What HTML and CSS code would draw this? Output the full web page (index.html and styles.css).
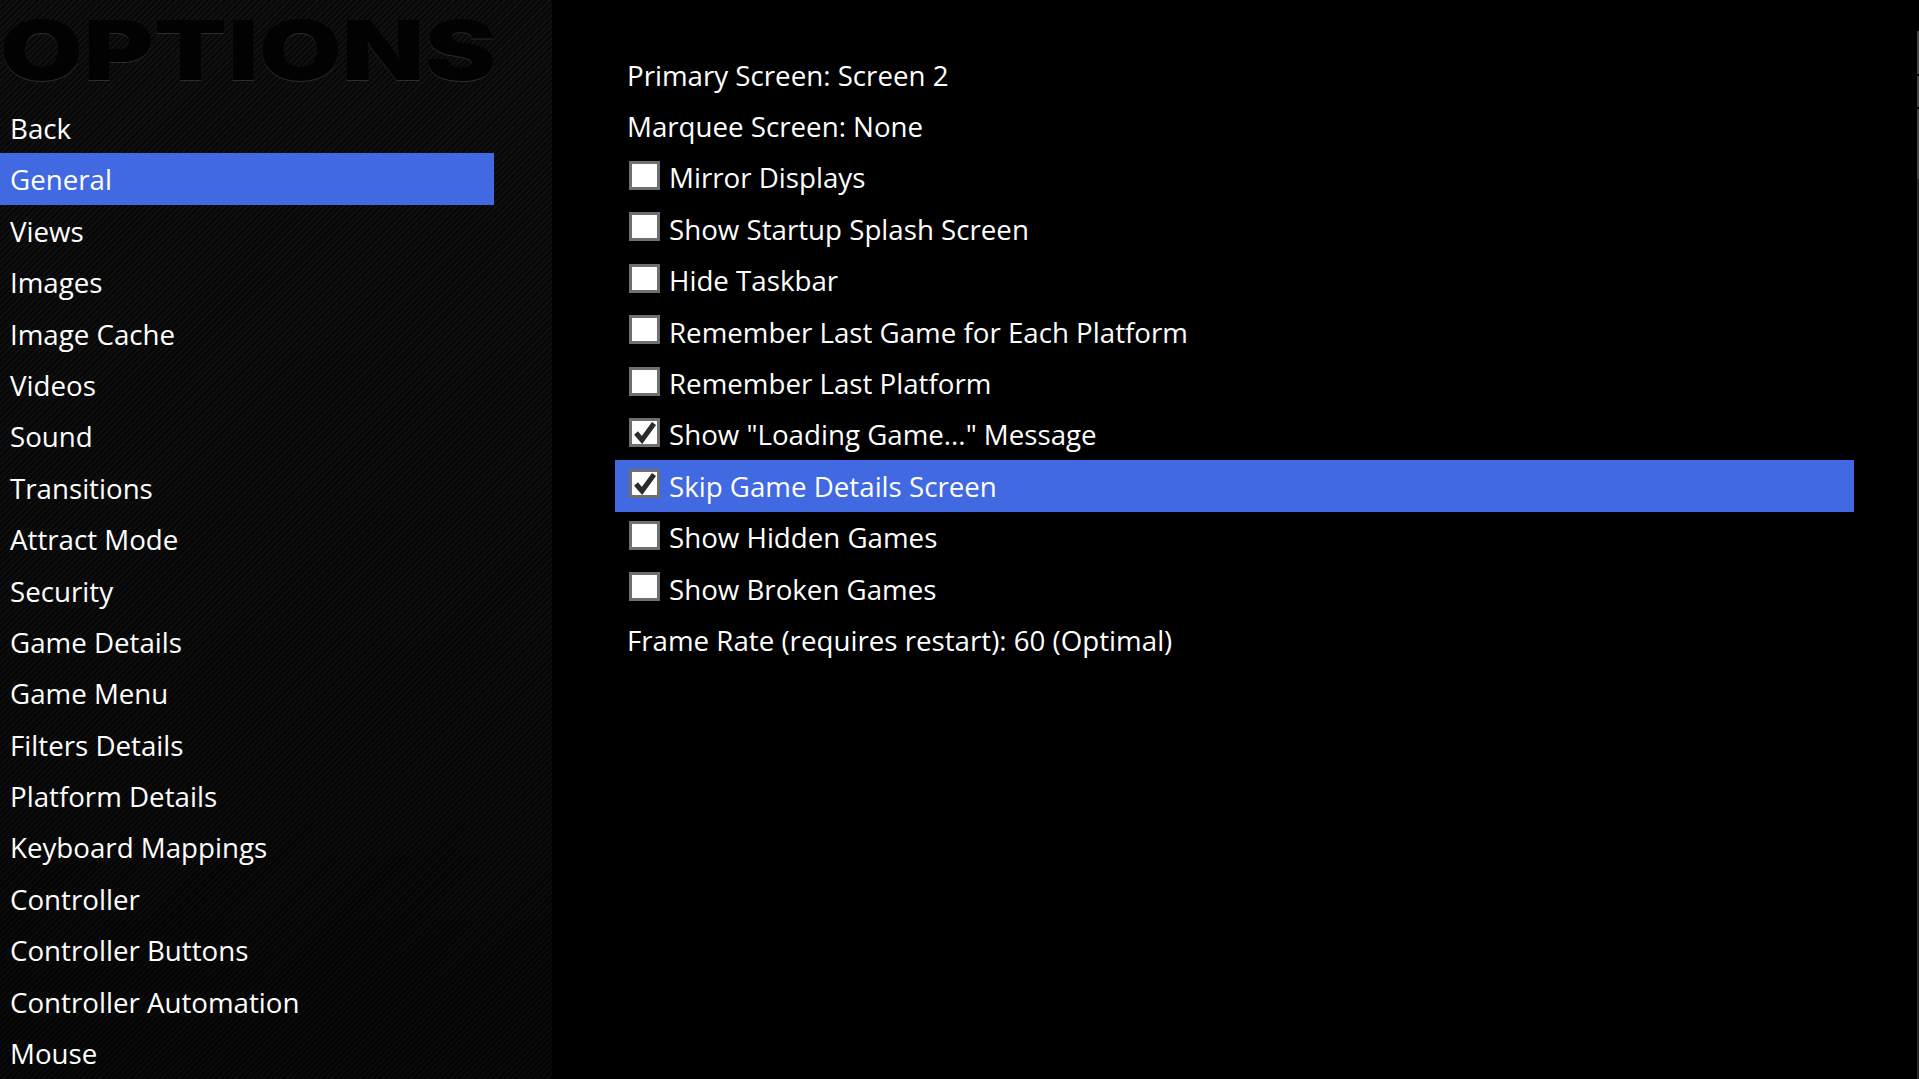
FILE: index.html
```html
<!DOCTYPE html>
<html lang="en">
<head>
    <meta charset="UTF-8">
    <title>Options</title>
    <link rel="stylesheet" href="styles.css">
</head>
<body>
    <div class="sidebar">
        <h1 class="title"><span>OPTIONS</span></h1>
        <ul class="menu">
            <li>Back</li>
            <li class="selected">General</li>
            <li>Views</li>
            <li>Images</li>
            <li>Image Cache</li>
            <li>Videos</li>
            <li>Sound</li>
            <li>Transitions</li>
            <li>Attract Mode</li>
            <li>Security</li>
            <li>Game Details</li>
            <li>Game Menu</li>
            <li>Filters Details</li>
            <li>Platform Details</li>
            <li>Keyboard Mappings</li>
            <li>Controller</li>
            <li>Controller Buttons</li>
            <li>Controller Automation</li>
            <li>Mouse</li>
        </ul>
    </div>

    <div class="content">
        <ul class="options">
            <li>Primary Screen: Screen 2</li>
            <li>Marquee Screen: None</li>
            <li><span class="check"></span>Mirror Displays</li>
            <li><span class="check"></span>Show Startup Splash Screen</li>
            <li><span class="check"></span>Hide Taskbar</li>
            <li><span class="check"></span>Remember Last Game for Each Platform</li>
            <li><span class="check"></span>Remember Last Platform</li>
            <li><span class="check"><svg viewBox="0 0 25 23"><path d="M4 12l6 7L22 2.5"/></svg></span>Show "Loading Game..." Message</li>
            <li class="selected"><span class="check"><svg viewBox="0 0 25 23"><path d="M4 12l6 7L22 2.5"/></svg></span>Skip Game Details Screen</li>
            <li><span class="check"></span>Show Hidden Games</li>
            <li><span class="check"></span>Show Broken Games</li>
            <li>Frame Rate (requires restart): 60 (Optimal)</li>
        </ul>
    </div>

    <div class="scrollbar">
        <div class="thumb thumb-a"></div>
        <div class="thumb thumb-b"></div>
        <div class="thumb thumb-c"></div>
        <div class="track"></div>
    </div>
</body>
</html>
```

FILE: styles.css
```css
html, body {
    height: 100%;
}
body {
    margin: 0;
    display: flex;
    overflow: hidden;
    position: relative;
    background-color: #000;
    color: #fff;
    font-family: "Open Sans", "Noto Sans", sans-serif;
    font-size: 27.7px;
}
ul {
    list-style: none;
    margin: 0;
    padding: 0;
}
.sidebar {
    width: 552px;
    flex-shrink: 0;
    overflow: hidden;
    background-color: #0a0a0a;
    background-image:
        linear-gradient(rgba(0,0,0,0) 0, rgba(0,0,0,0.45) 100%),
        repeating-linear-gradient(135deg, #111 0, #111 2px, #070707 2px, #070707 4px);
}
.title {
    margin: 0;
    height: 102px;
    font-family: Inter, "Liberation Sans", sans-serif;
    font-size: 82px;
    line-height: 102px;
    font-weight: 900;
    color: #020202;
    text-shadow: 0 1px 0 #2c2c2c;
}
.title span {
    display: inline-block;
    transform: scaleX(1.31);
    transform-origin: left center;
}
.menu li {
    box-sizing: border-box;
    height: 51.4px;
    line-height: 51.4px;
    padding: 1px 0 0 10px;
    width: 494px;
    white-space: nowrap;
}
.selected {
    background-color: royalblue;
}
.content {
    flex: 1;
    padding: 49px 65px 0 63px;
}
.options li {
    box-sizing: border-box;
    height: 51.4px;
    padding-left: 12px;
    display: flex;
    align-items: center;
    white-space: nowrap;
}
.check {
    width: 25px;
    height: 23px;
    margin: -4px 9px 0 2px;
    flex-shrink: 0;
    background-color: #fff;
    border: 3px solid #6f6f6f;
}
.check svg {
    display: block;
    width: 25px;
    height: 23px;
}
.check path {
    fill: none;
    stroke: #2b2b2b;
    stroke-width: 5;
}
.scrollbar {
    position: absolute;
    top: 31px;
    bottom: 0;
    right: 0;
    width: 2px;
    display: flex;
    flex-direction: column;
}
.thumb {
    background-color: #444;
}
.thumb-a {
    height: 43px;
    margin-bottom: 2px;
}
.thumb-b {
    height: 31px;
    margin-bottom: 2px;
}
.thumb-c {
    height: 70px;
}
.track {
    flex: 1;
    background-color: #2a2a2a;
}
```
